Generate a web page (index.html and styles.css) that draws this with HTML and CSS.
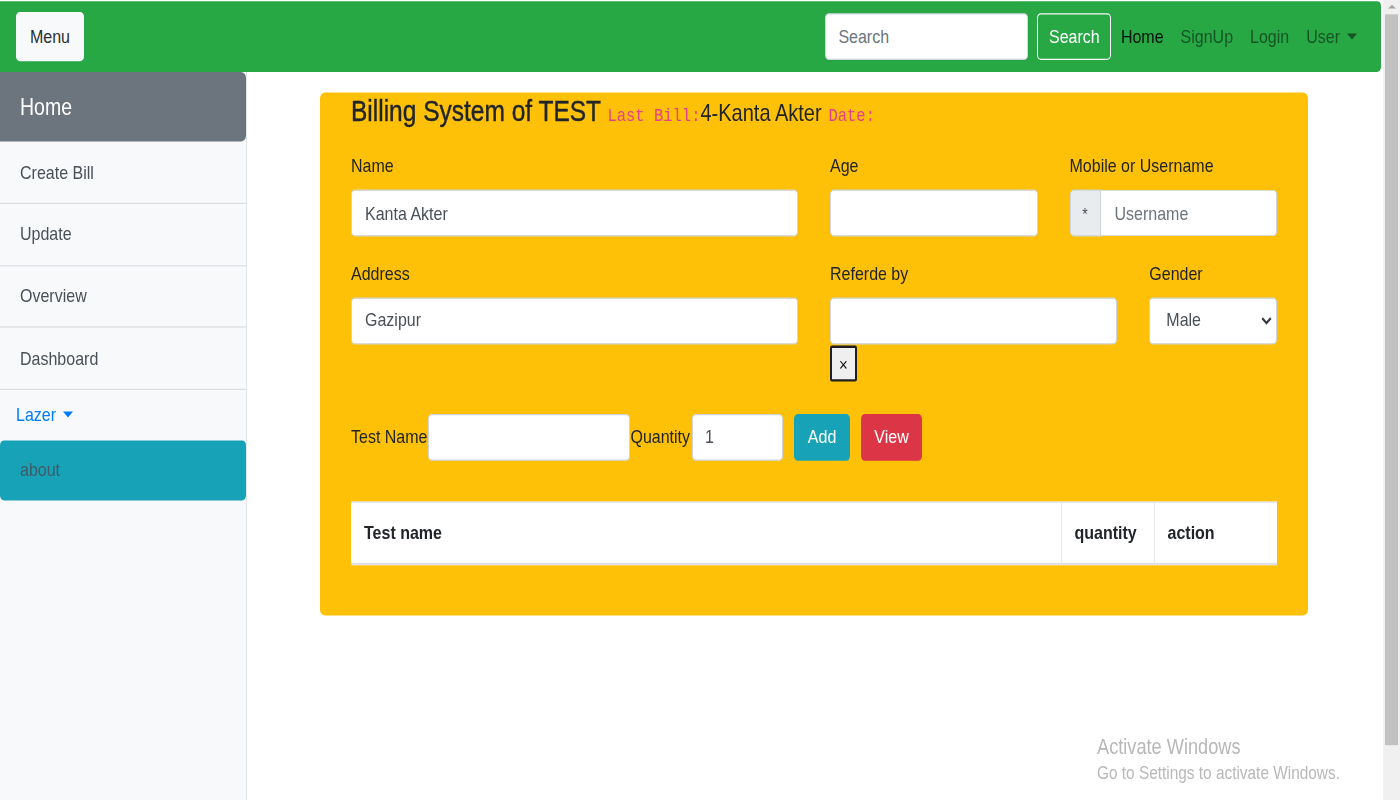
FILE: index.html
```html
<!DOCTYPE html>
<html lang="en">
<head>
<meta charset="utf-8">
<title>Billing System</title>
<link rel="stylesheet" href="styles.css">
</head>
<body>
<div class="screen">
  <div class="page">
    <nav class="navbar">
      <button class="menu-btn" type="button">Menu</button>
      <div class="nav-right">
        <form class="search-form">
          <input class="search-input" type="text" placeholder="Search">
          <button class="search-btn" type="button">Search</button>
        </form>
        <ul class="nav-links">
          <li class="nav-link active">Home</li>
          <li class="nav-link">SignUp</li>
          <li class="nav-link">Login</li>
          <li class="nav-link">User<span class="caret"></span></li>
        </ul>
      </div>
    </nav>
    <div class="layout">
      <aside class="sidebar">
        <div class="side-home">Home</div>
        <div class="side-item">Create Bill</div>
        <div class="side-item">Update</div>
        <div class="side-item">Overview</div>
        <div class="side-item">Dashboard</div>
        <div class="side-dropdown">Lazer<span class="caret caret-blue"></span></div>
        <div class="side-about">about</div>
      </aside>
      <main class="main">
        <section class="card">
          <h3 class="title">Billing System of TEST <code class="code">Last Bill:</code><span class="last">4-Kanta Akter</span> <code class="code">Date:</code></h3>
          <div class="form-grid">
            <div class="field span-6">
              <label class="label">Name</label>
              <div class="input">Kanta Akter</div>
            </div>
            <div class="field span-3">
              <label class="label">Age</label>
              <div class="input"></div>
            </div>
            <div class="field span-3">
              <label class="label">Mobile or Username</label>
              <div class="input-group">
                <span class="prepend">*</span>
                <div class="input input-grouped placeholder">Username</div>
              </div>
            </div>
          </div>
          <div class="form-grid row2">
            <div class="field span-6">
              <label class="label">Address</label>
              <div class="input">Gazipur</div>
            </div>
            <div class="field span-4">
              <label class="label">Referde by</label>
              <div class="input"></div>
              <button class="x-btn" type="button">×</button>
            </div>
            <div class="field span-2">
              <label class="label">Gender</label>
              <div class="input select">
                <span>Male</span>
                <svg class="chev" width="11" height="7" viewBox="0 0 11 7"><path d="M1.2 1.2 L5.5 5.3 L9.8 1.2" fill="none" stroke="#343a40" stroke-width="2"/></svg>
              </div>
            </div>
          </div>
          <div class="test-row">
            <span class="inline-label">Test Name</span>
            <div class="input test-input"></div>
            <span class="inline-label">Quantity</span>
            <div class="input qty-input">1</div>
            <button class="btn btn-add" type="button">Add</button>
            <button class="btn btn-view" type="button">View</button>
          </div>
          <table class="table">
            <thead>
              <tr>
                <th class="col-name">Test name</th>
                <th class="col-qty">quantity</th>
                <th class="col-action">action</th>
              </tr>
            </thead>
          </table>
        </section>
      </main>
    </div>
  </div>
  <div class="scrollbar">
    <div class="scroll-arrow"></div>
    <div class="scroll-thumb"></div>
  </div>
  <div class="watermark">
    <div class="wm-title">Activate Windows</div>
    <div class="wm-sub">Go to Settings to activate Windows.</div>
  </div>
</div>
</body>
</html>
```

FILE: styles.css
```css
* { box-sizing: border-box; }
html, body { margin: 0; padding: 0; }
body {
  width: 1400px;
  height: 800px;
  overflow: hidden;
  background: #fff;
  font-family: "Liberation Sans", Arial, sans-serif;
  color: #212529;
}
/* the reference capture is stretched vertically by 1.2 */
.screen {
  position: relative;
  display: flex;
  width: 1400px;
  height: 666.67px;
  transform: scale(1, 1.2);
  transform-origin: 0 0;
}
.page {
  width: 1383px;
  display: flex;
  flex-direction: column;
  padding-top: 1px;
}
.navbar {
  height: 59px;
  flex: none;
  margin-right: 2px;
  background: #28a745;
  border-radius: 0 4px 4px 0;
  display: flex;
  align-items: center;
  justify-content: space-between;
  padding: 0 16px;
}
.menu-btn {
  width: 68px;
  height: 41px;
  background: #f8f9fa;
  border: 1px solid #f8f9fa;
  border-radius: 4px;
  font-family: inherit;
  font-size: 16px;
  color: #2b2f33;
  padding: 0;
}
.nav-right { display: flex; align-items: center; }
.search-form { display: flex; align-items: center; margin: 0; }
.search-input {
  width: 203px;
  height: 39px;
  border: 1px solid #ced4da;
  border-radius: 4px;
  padding: 0 12px;
  font-family: inherit;
  font-size: 16px;
  color: #495057;
  margin-right: 9px;
}
.search-input::placeholder { color: #6c757d; }
.search-btn {
  width: 74px;
  height: 39px;
  background: transparent;
  border: 1px solid #f8f9fa;
  border-radius: 4px;
  color: #fff;
  font-family: inherit;
  font-size: 16px;
  padding: 0;
}
.nav-links {
  list-style: none;
  margin: 0 0 0 1px;
  padding: 0;
  display: flex;
  align-items: center;
}
.nav-link {
  padding: 0 8.5px;
  font-size: 16px;
  color: rgba(0, 0, 0, .5);
  display: flex;
  align-items: center;
}
.nav-link:last-child { padding-right: 8px; }
.nav-link.active { color: rgba(0, 0, 0, .9); }
.caret {
  display: inline-block;
  width: 0;
  height: 0;
  border-top: 5px solid rgba(0, 0, 0, .5);
  border-left: 5px solid transparent;
  border-right: 5px solid transparent;
  margin-left: 7px;
}
.caret-blue { border-top-color: #007bff; }

.layout { flex: 1; display: flex; }
.sidebar {
  width: 247px;
  background: #f8f9fa;
  border-right: 1px solid #e3e6e9;
  display: flex;
  flex-direction: column;
}
.side-home {
  height: 58.33px;
  flex: none;
  background: #6c757d;
  color: #fff;
  font-size: 19.5px;
  display: flex;
  align-items: center;
  padding-left: 20px;
  border-radius: 0 5px 5px 0;
}
.side-item {
  height: 51.67px;
  flex: none;
  border-bottom: 1px solid #d9dde1;
  display: flex;
  align-items: center;
  padding-left: 20px;
  font-size: 16px;
  color: #495057;
}
.side-dropdown {
  height: 41.67px;
  flex: none;
  display: flex;
  align-items: center;
  padding-left: 16px;
  font-size: 16px;
  color: #007bff;
}
.side-about {
  height: 50px;
  flex: none;
  background: #17a2b8;
  border-radius: 4px;
  display: flex;
  align-items: center;
  padding-left: 20px;
  font-size: 16px;
  color: #3f5b68;
}

.main {
  flex: 1;
  padding: 16.67px 75px 0 73px;
}
.card {
  background: #ffc107;
  border-radius: 5px;
  padding: 1.8px 31px 41.67px;
}
.title {
  margin: 0 0 13px;
  font-size: 24.5px;
  line-height: 29.4px;
  font-weight: 400;
  -webkit-text-stroke: 0.35px #212529;
  color: #212529;
  white-space: nowrap;
}
.code {
  font-family: "Liberation Mono", "DejaVu Sans Mono", monospace;
  font-size: 15.5px;
  color: #e83e8c;
  -webkit-text-stroke: 0;
}
.last { font-size: 20px; -webkit-text-stroke: 0; }

.form-grid {
  display: grid;
  grid-template-columns: repeat(12, 1fr);
  column-gap: 32px;
  margin-bottom: 19px;
}
.form-grid.row2 { margin-bottom: 26.67px; }
.span-6 { grid-column: span 6; }
.span-4 { grid-column: span 4; }
.span-3 { grid-column: span 3; }
.span-2 { grid-column: span 2; }
.field { display: flex; flex-direction: column; align-items: flex-start; }
.label {
  display: block;
  font-size: 16px;
  line-height: 24px;
  margin-bottom: 8.5px;
  color: #212529;
}
.input {
  width: 100%;
  height: 38.33px;
  background: #fff;
  border: 1px solid #ced4da;
  border-radius: 4px;
  padding: 0 13px;
  font-size: 16px;
  color: #495057;
  display: flex;
  align-items: center;
}
.input-group { display: flex; width: 100%; }
.prepend {
  width: 31px;
  height: 38.33px;
  flex: none;
  background: #e9ecef;
  border: 1px solid #ced4da;
  border-radius: 4px 0 0 4px;
  display: flex;
  align-items: center;
  justify-content: center;
  font-size: 14px;
  color: #495057;
}
.input-grouped {
  border-left: 0;
  border-radius: 0 4px 4px 0;
  padding-left: 14px;
}
.placeholder { color: #6c757d; }
.select {
  justify-content: space-between;
  padding: 0 4px 0 16px;
}
.x-btn {
  margin-top: 1.67px;
  width: 27px;
  height: 30px;
  background: #efefef;
  border: 2px solid #1f1f1f;
  border-radius: 2px;
  font-family: "Liberation Sans", sans-serif;
  font-size: 15px;
  color: #111;
  padding: 0;
}

.test-row {
  display: flex;
  align-items: center;
  height: 39.17px;
}
.inline-label { font-size: 16px; color: #212529; }
.test-input { width: 202px; height: 39.17px; margin-left: 1px; }
.qty-input { width: 91px; height: 39.17px; margin-left: 2px; padding-left: 12px; }
.btn {
  height: 39.17px;
  border: 0;
  border-radius: 4px;
  color: #fff;
  font-family: inherit;
  font-size: 16px;
  padding: 0;
  margin-left: 11px;
}
.btn-add { width: 56px; background: #17a2b8; }
.btn-view { width: 61px; background: #dc3545; }

.table {
  margin-top: 34.17px;
  width: 100%;
  background: #fff;
  border-collapse: collapse;
}
.table th {
  height: 51.5px;
  padding: 0 13px;
  font-size: 16px;
  font-weight: 700;
  text-align: left;
  color: #212529;
  border-top: 1px solid #dee2e6;
  border-bottom: 2px solid #dee2e6;
}
.col-qty { width: 93px; border-left: 1px solid #e6e8eb; }
.col-action { width: 123px; border-left: 1px solid #e6e8eb; }

.scrollbar {
  width: 17px;
  background: #f0f0f0;
  display: flex;
  flex-direction: column;
  align-items: center;
}
.scroll-arrow {
  margin-top: 3.5px;
  width: 0;
  height: 0;
  border-bottom: 3px solid #a3a3a3;
  border-left: 4px solid transparent;
  border-right: 4px solid transparent;
}
.scroll-thumb {
  margin-top: 5px;
  width: 13px;
  height: 609px;
  background: #c1c1c1;
}

.watermark {
  position: absolute;
  left: 1097px;
  top: 611px;
  color: #b8b8b8;
}
.wm-title { font-size: 18.2px; line-height: 22px; }
.wm-sub { font-size: 15.4px; line-height: 22px; }
```
